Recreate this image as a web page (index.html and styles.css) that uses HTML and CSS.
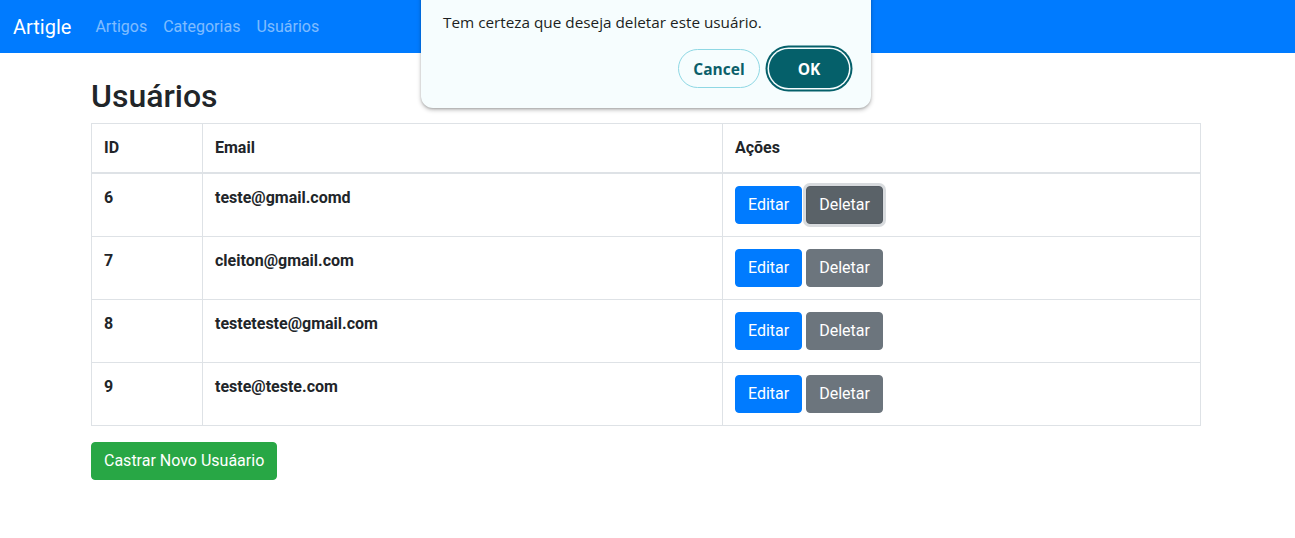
FILE: index.html
```html
<!DOCTYPE html>
<html lang="pt-BR">
<head>
<meta charset="utf-8">
<title>Artigle - Usuários</title>
<link rel="stylesheet" href="styles.css">
</head>
<body>
<nav class="navbar">
  <a class="brand" href="#">Artigle</a>
  <ul class="nav-links">
    <li><a href="#">Artigos</a></li>
    <li><a href="#">Categorias</a></li>
    <li><a href="#">Usuários</a></li>
  </ul>
</nav>

<main class="container">
  <h2 class="page-title">Usuários</h2>
  <table class="table">
    <thead>
      <tr>
        <th class="col-id">ID</th>
        <th class="col-email">Email</th>
        <th class="col-actions">Ações</th>
      </tr>
    </thead>
    <tbody>
      <tr>
        <td>6</td>
        <td>teste@gmail.comd</td>
        <td><button class="btn btn-primary">Editar</button> <button class="btn btn-secondary is-focused">Deletar</button></td>
      </tr>
      <tr>
        <td>7</td>
        <td>cleiton@gmail.com</td>
        <td><button class="btn btn-primary">Editar</button> <button class="btn btn-secondary">Deletar</button></td>
      </tr>
      <tr>
        <td>8</td>
        <td>testeteste@gmail.com</td>
        <td><button class="btn btn-primary">Editar</button> <button class="btn btn-secondary">Deletar</button></td>
      </tr>
      <tr>
        <td>9</td>
        <td>teste@teste.com</td>
        <td><button class="btn btn-primary">Editar</button> <button class="btn btn-secondary">Deletar</button></td>
      </tr>
    </tbody>
  </table>
  <button class="btn btn-success">Castrar Novo Usuáario</button>
</main>

<div class="dialog" role="dialog">
  <p class="dialog-text">Tem certeza que deseja deletar este usuário.</p>
  <div class="dialog-actions">
    <button class="dbtn dbtn-cancel">Cancel</button>
    <button class="dbtn dbtn-ok">OK</button>
  </div>
</div>
</body>
</html>
```

FILE: styles.css
```css
* { box-sizing: border-box; }

html, body {
  margin: 0;
  padding: 0;
}

body {
  font-family: Roboto, "Liberation Sans", sans-serif;
  font-size: 16px;
  line-height: 1.5;
  color: #212529;
  background: #fff;
  position: relative;
  min-height: 538px;
}

.navbar {
  display: flex;
  align-items: center;
  height: 53px;
  padding: 0 16px 0 13px;
  background: #007bff;
}

.brand {
  color: #fff;
  font-size: 20px;
  line-height: 30px;
  text-decoration: none;
  margin-right: 16px;
}

.nav-links {
  display: flex;
  list-style: none;
  margin: 0;
  padding: 0;
}

.nav-links a {
  display: block;
  padding: 8px 8px;
  color: rgba(255, 255, 255, 0.5);
  text-decoration: none;
  line-height: 24px;
}

.container {
  width: 1113px;
  margin: 0 auto;
  padding-top: 24px;
}

.page-title {
  font-size: 32px;
  font-weight: 500;
  line-height: 1.2;
  margin: 0 0 8px;
}

.table {
  width: 1109px;
  border-collapse: collapse;
  table-layout: fixed;
  margin-bottom: 16px;
}

.table th,
.table td {
  border: 1px solid #dee2e6;
  padding: 12px;
  text-align: left;
  vertical-align: top;
  font-weight: 700;
}

.table thead th {
  border-bottom: 2px solid #dee2e6;
}

.col-id { width: 111px; }
.col-email { width: 520px; }
.col-actions { width: 478px; }

.btn {
  display: inline-block;
  font-family: inherit;
  font-size: 16px;
  line-height: 24px;
  padding: 6px 12px;
  border: 1px solid transparent;
  border-radius: 4px;
  color: #fff;
  cursor: pointer;
  vertical-align: middle;
}

.btn-primary { background: #007bff; border-color: #007bff; }
.btn-secondary { background: #6c757d; border-color: #6c757d; }
.btn-secondary.is-focused {
  background: #5a6268;
  border-color: #545b62;
  box-shadow: 0 0 0 3px rgba(190, 195, 200, 0.6);
}
.btn-success { background: #28a745; border-color: #28a745; }

/* Modal overlay dialog (partly above the viewport) */
.dialog {
  position: absolute;
  left: 421px;
  top: -38px;
  width: 450px;
  padding: 48px 22px 20px;
  background: #f6fdfe;
  border-radius: 12px;
  box-shadow: 0 2px 4px rgba(0, 0, 0, 0.25), 0 1px 2px rgba(0, 0, 0, 0.15);
  font-family: "Open Sans", "Noto Sans", sans-serif;
  color: #1c1f22;
}

.dialog-text {
  margin: 0;
  font-size: 15.3px;
  line-height: 24px;
}

.dialog-actions {
  display: flex;
  justify-content: flex-end;
  gap: 9px;
  margin-top: 15px;
}

.dbtn {
  font-family: "Open Sans", "Noto Sans", sans-serif;
  font-size: 15.5px;
  font-weight: 700;
  height: 39px;
  border-radius: 20px;
  cursor: pointer;
}

.dbtn-cancel {
  width: 82px;
  background: #f6fdfe;
  color: #0b5f6a;
  border: 1px solid #8fd8e4;
}

.dbtn-ok {
  width: 80px;
  background: #05606a;
  color: #fff;
  border: none;
  box-shadow: 0 0 0 1.5px #f6fdfe, 0 0 0 3.5px #05606a;
}
```
